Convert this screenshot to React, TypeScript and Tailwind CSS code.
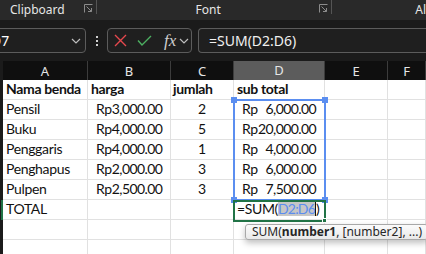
import React from "react";

const rows = [
  { a: "Pensil", b: "3,000.00", c: "2", d: "6,000.00" },
  { a: "Buku", b: "4,000.00", c: "5", d: "20,000.00" },
  { a: "Penggaris", b: "4,000.00", c: "1", d: "4,000.00" },
  { a: "Penghapus", b: "2,000.00", c: "3", d: "6,000.00" },
  { a: "Pulpen", b: "2,500.00", c: "3", d: "7,500.00" },
];

const cols = ["A", "B", "C", "D", "E", "F"];

function Launcher() {
  return (
    <svg width="9" height="9" viewBox="0 0 9 9" fill="none" stroke="#8c8c8c" strokeWidth="1">
      <path d="M0.5 8.5V0.5H8.5" />
      <path d="M2.5 2.5L7.5 7.5M4 7.5H7.5V4" />
    </svg>
  );
}

function Chevron() {
  return (
    <svg width="10" height="6" viewBox="0 0 10 6" fill="none" stroke="#bdbdbd" strokeWidth="1.2">
      <path d="M1 1l4 4 4-4" />
    </svg>
  );
}

const grid = "grid grid-cols-[3px_85px_83px_63px_91px_63px_1fr]";
const cell = "h-[20px] overflow-visible whitespace-nowrap border-r border-b border-[#e1e1e1] bg-white";

function Acc({ v, sel }: { v: string; sel?: boolean }) {
  return (
    <div className={`${cell} flex items-end justify-between pb-[3px] pl-[8px] pr-[8px] ${sel ? "bg-[#e8f0fb] border-[#d5def0]" : ""}`}>
      <span>Rp</span>
      <span className="tracking-[-0.6px]">{v}</span>
    </div>
  );
}

export default function App() {
  return (
    <div className="h-[254px] w-[426px] overflow-hidden bg-[#1b1b1b] font-['Noto_Sans',sans-serif]">
      {/* ribbon group labels */}
      <div className="flex h-[20px] items-center bg-[#292929] text-[12px] text-[#e6e6e6]">
        <span className="ml-[10px] w-[75px]">Clipboard</span>
        <span className="-mt-[4px]"><Launcher /></span>
        <span className="ml-[3px] h-[14px] w-px self-start bg-[#555]" />
        <span className="ml-[99px] w-[126px]">Font</span>
        <span className="-mt-[4px]"><Launcher /></span>
        <span className="ml-[3px] h-[14px] w-px self-start bg-[#555]" />
        <span className="ml-[83px]">Al</span>
      </div>

      {/* formula bar */}
      <div className="mt-[8px] flex h-[25px] items-stretch">
        <div className="-ml-[12px] flex w-[98px] items-center justify-between rounded-[4px] border border-[#5c5c5c] bg-[#1f1f1f] pl-[2px] pr-[4px] text-[14px] text-white">
          <span>D7</span>
          <Chevron />
        </div>
        <div className="flex w-[21px] flex-col items-center justify-center gap-[2px]">
          <span className="h-[2px] w-[2px] bg-[#d0d0d0]" />
          <span className="h-[2px] w-[2px] bg-[#d0d0d0]" />
          <span className="h-[2px] w-[2px] bg-[#d0d0d0]" />
        </div>
        <div className="flex w-[85px] items-center rounded-[4px] border border-[#5c5c5c] bg-[#1f1f1f] pl-[6px]">
          <svg width="13" height="13" viewBox="0 0 13 13" stroke="#e5484d" strokeWidth="1.4">
            <path d="M1 1l11 11M12 1L1 12" />
          </svg>
          <svg className="ml-[10px]" width="15" height="11" viewBox="0 0 15 11" fill="none" stroke="#4caf61" strokeWidth="1.4">
            <path d="M1 5.5l4 4.5 9-9" />
          </svg>
          <span className="ml-[12px] font-['Liberation_Serif',serif] text-[17px] italic leading-none text-[#cfcfcf]">fx</span>
          <span className="ml-[3px]"><Chevron /></span>
        </div>
        <div className="ml-[6px] flex flex-1 items-center rounded-l-[4px] border border-r-0 border-[#5c5c5c] bg-[#1f1f1f] pl-[10px] text-[14px] text-[#f0f0f0]">
          =SUM(D2:D6)
        </div>
      </div>

      {/* column headers */}
      <div className={`${grid} mt-[8px] h-[19px] bg-[#0f0f0f] text-[13px] text-[#e6e6e6]`}>
        <div className="bg-[#1b1b1b]" />
        {cols.map((c) => (
          <div
            key={c}
            className={`flex items-center justify-center border-r border-[#3c3c3c] ${c === "D" ? "border-b-2 border-b-[#217346] bg-[#5c5c5c]" : ""}`}
          >
            {c}
          </div>
        ))}
      </div>

      {/* sheet */}
      <div className="relative font-['Lato',sans-serif] text-[14px] leading-none tracking-[-0.35px] text-[#111]">
        <div className={grid}>
          <div className="h-[20px] bg-[#1b1b1b]" />
          <div className={`${cell} flex items-end pb-[3px] pl-[3px] font-bold`}>Nama benda</div>
          <div className={`${cell} flex items-end pb-[3px] pl-[3px] font-bold`}>harga</div>
          <div className={`${cell} flex items-end pb-[3px] pl-[2px] font-bold`}>jumlah</div>
          <div className={`${cell} flex items-end pb-[3px] pl-[3px] font-bold`}>sub total</div>
          <div className={cell} />
          <div className={cell} />
        </div>
        {rows.map((r) => (
          <div key={r.a} className={grid}>
            <div className="h-[20px] bg-[#1b1b1b]" />
            <div className={`${cell} flex items-end pb-[3px] pl-[3px]`}>{r.a}</div>
            <Acc v={r.b} />
            <div className={`${cell} flex items-end justify-center pb-[3px]`}>{r.c}</div>
            <Acc v={r.d} sel />
            <div className={cell} />
            <div className={cell} />
          </div>
        ))}
        <div className={grid}>
          <div className="h-[20px] border-r-2 border-[#217346] bg-[#1b1b1b]" />
          <div className={`${cell} flex items-end pb-[3px] pl-[3px]`}>TOTAL</div>
          <div className={cell} />
          <div className={cell} />
          <div className={`${cell} flex items-end pb-[3px] pl-[3px]`}>
            =SUM(
            <span className="bg-[#c6c6c6] tracking-[-0.8px] text-[#5b8def]">D2:D6</span>
            <span className="h-[14px] w-px bg-[#111]" />)
          </div>
          <div className={cell} />
          <div className={cell} />
        </div>
        {[8, 9].map((n) => (
          <div key={n} className={grid}>
            <div className="h-[20px] bg-[#1b1b1b]" />
            <div className={cell} />
            <div className={cell} />
            <div className={cell} />
            <div className={cell} />
            <div className={cell} />
            <div className={cell} />
          </div>
        ))}

        {/* selection D2:D6 */}
        <div className="pointer-events-none absolute left-[233px] top-[19px] h-[102px] w-[93px] border-2 border-[#5b8ef0]" />
        {[
          "left-[231px] top-[17px]",
          "left-[322px] top-[17px]",
          "left-[231px] top-[117px]",
          "left-[322px] top-[117px]",
        ].map((p) => (
          <div key={p} className={`absolute ${p} h-[6px] w-[6px] bg-[#5b8ef0]`} />
        ))}

        {/* active cell D7 */}
        <div className="pointer-events-none absolute left-[233px] top-[120px] h-[22px] w-[93px] border-2 border-[#217346]" />
        <div className="absolute left-[322px] top-[138px] h-[5px] w-[5px] border border-white bg-[#217346]" />

        {/* function tooltip */}
        <div className="absolute left-[245px] top-[144px] flex h-[16px] items-center whitespace-nowrap rounded-[3px] border border-[#a8a8a8] bg-gradient-to-b from-[#fbfbfb] to-[#e9e9e9] pl-[6px] pr-[5px] font-['Noto_Sans',sans-serif] text-[12px] tracking-normal text-[#262626] shadow-[0_3px_6px_rgba(0,0,0,0.25)]">
          SUM(<b>number1</b>, [number2], ...)
        </div>
      </div>
    </div>
  );
}
